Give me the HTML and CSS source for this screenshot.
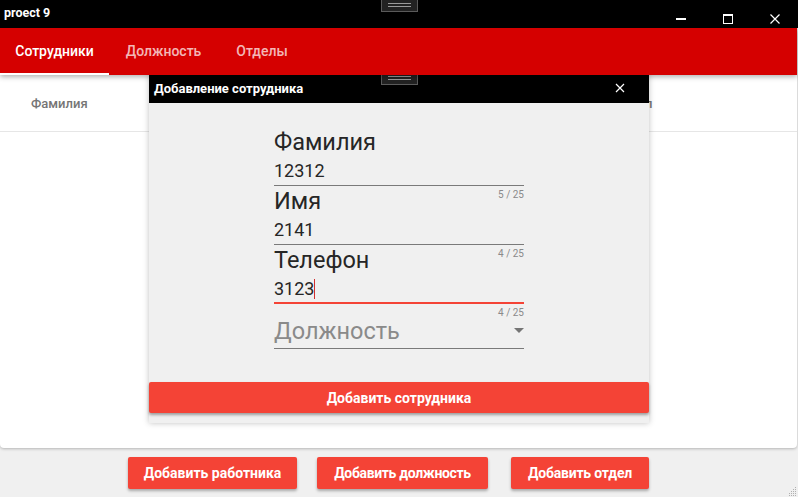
FILE: index.html
```html
<!DOCTYPE html>
<html lang="ru">
<head>
<meta charset="utf-8">
<title>proect 9</title>
<link rel="stylesheet" href="styles.css">
</head>
<body>
<div class="window">
  <header class="titlebar">
    <span class="app-title">proect 9</span>
    <div class="win-controls">
      <span class="wbtn"><svg width="12" height="12" viewBox="0 0 12 12"><rect x="1" y="5" width="10" height="2" fill="#fff"/></svg></span>
      <span class="wbtn"><svg width="12" height="12" viewBox="0 0 12 12"><rect x="1.5" y="1.5" width="9" height="9" fill="none" stroke="#fff" stroke-width="1"/><rect x="1" y="1" width="10" height="2" fill="#fff"/></svg></span>
      <span class="wbtn"><svg width="12" height="12" viewBox="0 0 12 12"><path d="M1.5 1.5 L10.5 10.5 M10.5 1.5 L1.5 10.5" stroke="#fff" stroke-width="1.2"/></svg></span>
    </div>
  </header>
  <main class="card">
    <nav class="tabs">
      <span class="tab active">Сотрудники</span>
      <span class="tab">Должность</span>
      <span class="tab">Отделы</span>
    </nav>
    <div class="thead">
      <span class="th">Фамилия</span>
      <span class="th">Имя</span>
      <span class="th">Телефон</span>
      <span class="th">Должность</span>
      <span class="th">Отдел</span>
    </div>
  </main>
  <footer class="actions">
    <button class="btn btn-worker">Добавить работника</button>
    <button class="btn btn-position">Добавить должность</button>
    <button class="btn btn-dept">Добавить отдел</button>
  </footer>
  <span class="grip"><svg width="8" height="10" viewBox="0 0 8 10"><g fill="#b0b0b0"><rect x="6" y="1" width="1" height="1"/><rect x="4" y="3" width="1" height="1"/><rect x="6" y="3" width="1" height="1"/><rect x="2" y="5" width="1" height="1"/><rect x="4" y="5" width="1" height="1"/><rect x="6" y="5" width="1" height="1"/><rect x="0" y="7" width="1" height="1"/><rect x="2" y="7" width="1" height="1"/><rect x="4" y="7" width="1" height="1"/><rect x="6" y="7" width="1" height="1"/><rect x="0" y="9" width="1" height="1"/><rect x="2" y="9" width="1" height="1"/><rect x="4" y="9" width="1" height="1"/><rect x="6" y="9" width="1" height="1"/></g></svg></span>
  <span class="handle handle-main"></span>

  <section class="dialog">
    <div class="dlg-title">
      <span>Добавление сотрудника</span>
      <svg class="dlg-close" width="10" height="10" viewBox="0 0 10 10"><path d="M1 1 L9 9 M9 1 L1 9" stroke="#fff" stroke-width="1.2"/></svg>
    </div>
    <span class="handle handle-dlg"></span>
    <div class="dlg-body">
      <div class="fields">
        <div class="field">
          <div class="flabel">Фамилия</div>
          <div class="finput">12312</div>
          <span class="counter">5 / 25</span>
        </div>
        <div class="field">
          <div class="flabel">Имя</div>
          <div class="finput">2141</div>
          <span class="counter">4 / 25</span>
        </div>
        <div class="field">
          <div class="flabel">Телефон</div>
          <div class="finput focused">3123<span class="caret"></span></div>
          <span class="counter">4 / 25</span>
        </div>
        <div class="select">
          <span>Должность</span>
          <svg width="10" height="6" viewBox="0 0 10 6"><path d="M0 0 L10 0 L5 5 Z" fill="#757575"/></svg>
        </div>
      </div>
      <button class="dlg-btn">Добавить сотрудника</button>
    </div>
  </section>
</div>
</body>
</html>
```
FILE: styles.css
```css
* { box-sizing: border-box; }
html, body { margin: 0; padding: 0; }
body {
  width: 798px;
  height: 497px;
  overflow: hidden;
  background: #f0f0f0;
  font-family: Roboto, "Noto Sans", sans-serif;
}
.window {
  position: relative;
  width: 798px;
  height: 497px;
  display: flex;
  flex-direction: column;
}
.titlebar {
  height: 28px;
  background: #000;
  display: flex;
  align-items: flex-start;
  justify-content: space-between;
}
.app-title {
  color: #fff;
  font-weight: 700;
  font-size: 12.5px;
  line-height: 26px;
  padding-left: 4px;
}
.win-controls {
  display: flex;
  padding-top: 13px;
  padding-right: 0;
}
.wbtn {
  width: 47px;
  display: flex;
  justify-content: center;
  height: 12px;
}
.card {
  height: 420px;
  background: #fff;
  border-radius: 0 0 4px 4px;
  box-shadow: 0 1px 3px rgba(0,0,0,0.25);
  margin-right: 1px;
  display: flex;
  flex-direction: column;
}
.tabs {
  height: 47px;
  background: #d50000;
  display: flex;
  box-shadow: 0 2px 5px rgba(0,0,0,0.3);
  position: relative;
  z-index: 1;
}
.tab {
  min-width: 88px;
  padding: 0 16px;
  font-size: 14px;
  font-weight: 500;
  color: rgba(255,255,255,0.72);
  line-height: 47px;
  text-align: center;
}
.tab:first-child { min-width: 109px; padding: 0 15px; }
.tab:nth-child(2) { min-width: 109px; }
.tab.active {
  color: #fff;
  box-shadow: inset 0 -2px 0 #fff;
}
.thead {
  height: 57px;
  border-bottom: 1px solid #e6e6e6;
  display: flex;
  align-items: center;
  padding-left: 31px;
}
.th {
  width: 146px;
  font-size: 13px;
  font-weight: 500;
  color: #757575;
}
.actions {
  flex: 1;
  display: flex;
  padding: 9px 0 0 128px;
  align-items: flex-start;
}
.btn {
  height: 32px;
  padding: 0;
  border: 0;
  border-radius: 2px;
  background: #f44336;
  color: #fff;
  font-family: Roboto, sans-serif;
  font-size: 14px;
  font-weight: 700;
  white-space: nowrap;
  box-shadow: 0 2px 3px rgba(0,0,0,0.3);
}
.btn-worker { width: 169px; }
.btn-position { width: 171px; margin-left: 20px; letter-spacing: -0.35px; }
.btn-dept { width: 138px; margin-left: 23px; letter-spacing: -0.2px; }
.grip {
  position: absolute;
  right: 1px;
  bottom: 1px;
  line-height: 0;
}
.handle {
  position: absolute;
  width: 37px;
  height: 12px;
  left: 381px;
  background: #222;
  border: 1px solid #5a5a5a;
  border-top: 0;
}
.handle::before, .handle::after {
  content: "";
  position: absolute;
  left: 6px;
  right: 6px;
  height: 1px;
  background: #9a9a9a;
}
.handle::before { top: 3px; }
.handle::after { top: 6px; }
.handle-main { top: 0; }
.handle-dlg { top: 0; left: 232px; }

.dialog {
  position: absolute;
  left: 149px;
  top: 73px;
  width: 500px;
  box-shadow: 0 0 6px rgba(0,0,0,0.25);
}
.dlg-title {
  height: 30px;
  background: #000;
  color: #fff;
  font-size: 13px;
  font-weight: 700;
  display: flex;
  align-items: center;
  justify-content: space-between;
  padding: 0 24px 0 5px;
}
.dlg-body {
  background: #f0f0f0;
  padding: 27px 0 10px;
}
.fields {
  width: 250px;
  margin-left: 125px;
  display: flex;
  flex-direction: column;
  gap: 3px;
}
.field { position: relative; }
.flabel {
  font-size: 23.5px;
  line-height: 24px;
  height: 24px;
  color: #262626;
}
.finput {
  height: 32px;
  padding-top: 7px;
  font-size: 18px;
  line-height: 20px;
  color: #262626;
  border-bottom: 1px solid #7a7a7a;
}
.finput.focused {
  border-bottom: 2px solid #f44336;
}
.caret {
  display: inline-block;
  width: 1px;
  height: 20px;
  background: #d32f2f;
  vertical-align: -4px;
}
.counter {
  position: absolute;
  right: 0;
  top: 60px;
  font-size: 10px;
  line-height: 10px;
  color: #8a8a8a;
}
.select {
  height: 42px;
  padding-top: 12px;
  font-size: 23.5px;
  line-height: 24px;
  color: #8a8a8a;
  border-bottom: 1px solid #7a7a7a;
  display: flex;
  justify-content: space-between;
}
.select svg { margin-top: 9px; margin-right: 0; }
.dlg-btn {
  display: block;
  width: 100%;
  height: 31px;
  margin-top: 33px;
  border: 0;
  border-radius: 2px;
  background: #f44336;
  color: #fff;
  font-family: Roboto, sans-serif;
  font-size: 14px;
  font-weight: 700;
  box-shadow: 0 2px 3px rgba(0,0,0,0.35);
}
```
